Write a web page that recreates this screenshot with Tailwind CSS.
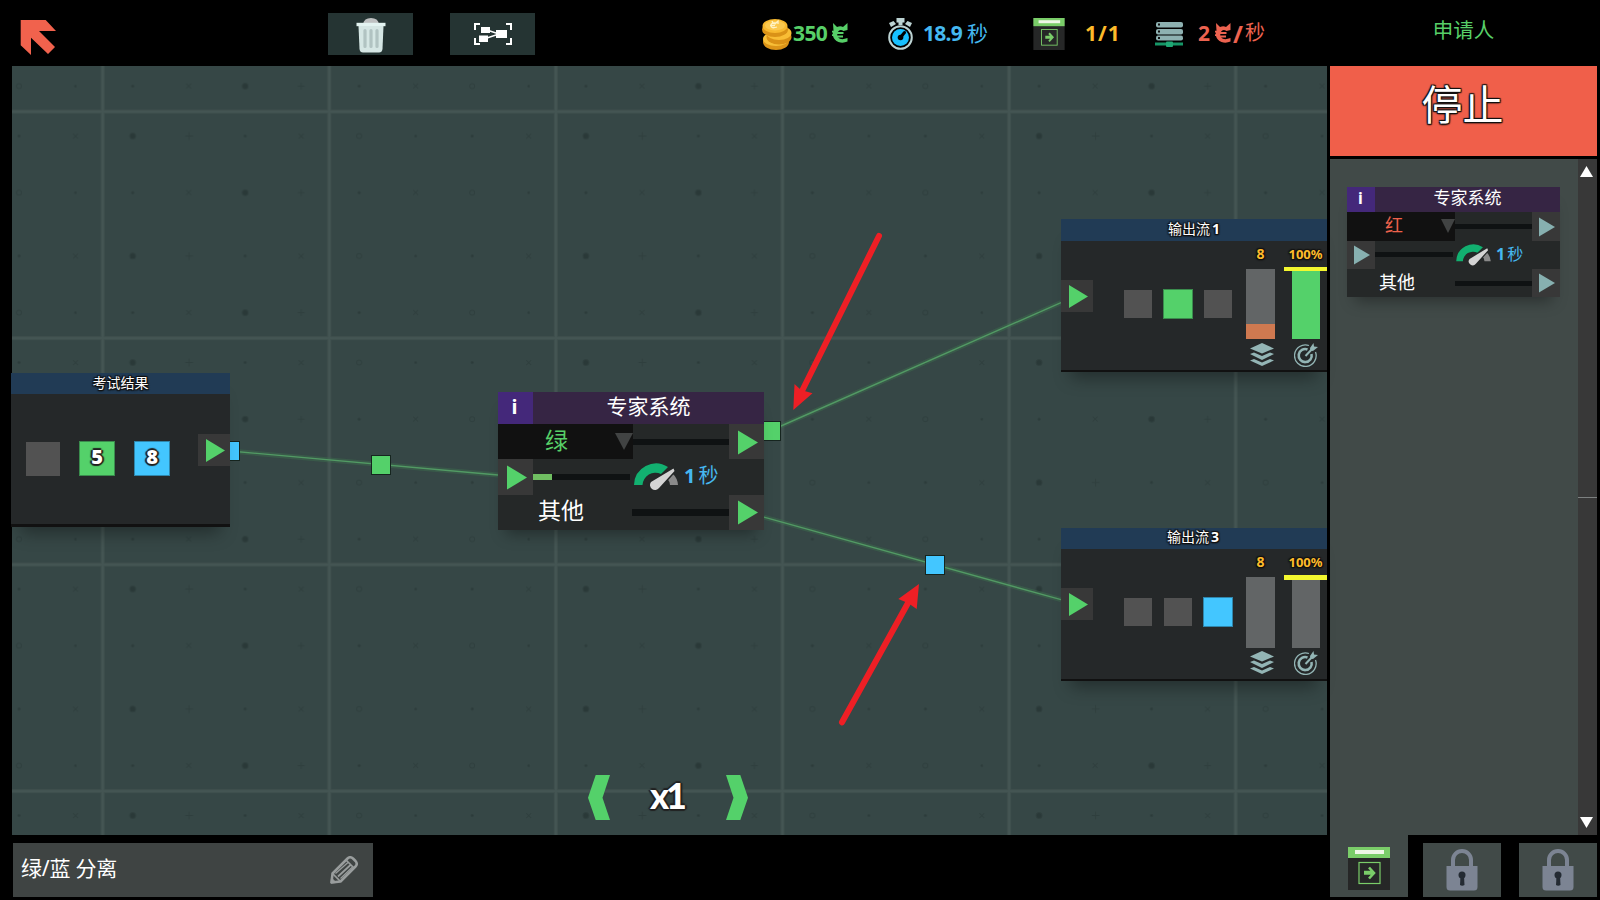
<!DOCTYPE html>
<html lang="zh-CN">
<head>
    <meta charset="UTF-8">
    <meta name="viewport" content="width=device-width, initial-scale=1.0">
    <title>绿/蓝 分离</title>
    <script src="https://cdn.jsdelivr.net/npm/@tailwindcss/browser@4"></script>
    <style>
        body { font-family: "Noto Sans", "Noto Sans CJK SC", sans-serif; }
        .outlined { text-shadow: -1px -1px 1px #111, 1px -1px 1px #111, -1px 1px 1px #111, 1px 1px 1px #111, 0 1px 2px #111; }
        .outlined-lg { text-shadow: -2px 0 1px #222, 2px 0 1px #222, 0 -2px 1px #222, 0 2px 1px #222, 1px 1px 1px #222, -1px 1px 1px #222; }
    </style>
</head>
<body class="bg-black w-[1600px] h-[900px] overflow-hidden text-white">
    <!-- shared icons -->
    <svg class="hidden">
        <symbol id="play" viewBox="0 0 20 24"><path d="M0 0L20 12L0 24z" fill="currentColor"/></symbol>
        <symbol id="gauge" viewBox="0 0 44 28">
            <path d="M0 22A22 22 0 0 1 34 4L27 11A13 13 0 0 0 8.500 22z" fill="#12b070"/>
            <path d="M38.500 10.500Q43.500 15 44 22H36Q35.500 18 33.500 16z" fill="#8a8a8a"/>
            <path d="M39.500 5.500L40.500 8L25 25A4.800 4.800 0 1 1 17 19z" fill="#d4d4d4" stroke="#252828" stroke-width="3" paint-order="stroke" stroke-linejoin="round"/>
        </symbol>
        <symbol id="coin" viewBox="0 0 16 20">
            <path d="M1 0L5 4Q8.500 2.500 11 4L15.500 0V7L11.500 8Q8 5.500 5.800 9H11.500V11H5.300V12.500H11V14.500H6Q9 17.500 15.500 15V18.500Q11 20.500 6.500 19Q2 17 1 13H0V11.200H.8V9.500H0V7.700H1.500z" fill="currentColor"/>
        </symbol>
        <symbol id="layers" viewBox="0 0 24 23">
            <g fill="#93b5b5"><path d="M12 0L24 5.500L12 10.500L0 5.500z"/><path d="M0 11L4 9.500L12 13L20 9.500L24 11L12 17z"/><path d="M0 17.500L4 16L12 19.500L20 16L24 17.500L12 23z"/></g>
        </symbol>
        <symbol id="target" viewBox="0 0 24 24">
            <g fill="none" stroke="#93b5b5"><path d="M15 2.500A10.800 10.800 0 1 0 21.500 9" stroke-width="1.300"/><path d="M13.500 6.500A6.500 6.500 0 1 0 17.500 11" stroke-width="2.600"/><path d="M11.500 13L19 5" stroke-width="2"/></g>
            <path d="M16 5L19.500 0L20 3.500L24 4L19 8L16.500 7.500z" fill="#93b5b5"/>
        </symbol>
        <symbol id="stream" viewBox="0 0 42 43">
            <rect width="42" height="43" fill="#262727"/><rect width="42" height="11" fill="#7acd69"/><rect x="7" y="3" width="29" height="4" fill="#eef7e6"/>
            <rect x="11" y="15.500" width="21" height="21" fill="none" stroke="#7acd69" stroke-width="1.200"/>
            <path d="M16 25H25M21 20.500L26 26L21 31.500M16 26.500H25" fill="none" stroke="#7acd69" stroke-width="2.600"/>
        </symbol>
        <symbol id="lock" viewBox="0 0 32 42">
            <path d="M7 19V11A9 9 0 0 1 25 11V19" fill="none" stroke="#7c8493" stroke-width="4"/>
            <path d="M.5 17H31.500V38Q31.500 41.500 28 41.500H4Q.5 41.500 .5 38z" fill="#7c8493"/>
            <circle cx="16" cy="26" r="3.500" fill="#242b33"/><path d="M14.500 27h3.500l.5 9q-2.500 1.500-4.500 0z" fill="#242b33"/>
        </symbol>
    </svg>

    <div class="flex w-[1600px] h-[900px]">
        <div class="w-[1330px] shrink-0 flex flex-col">
            <!-- Toolbar -->
            <header class="h-[66px] shrink-0 flex items-start">
                <svg class="w-9 h-9 ml-5 mt-5" viewBox="20 20 36 36"><path d="M20.700 20H45.700L56 31H39L55 47L48 54L31 37.700V55L20.700 45.300z" fill="#f1624d"/></svg>
                <button class="ml-[272px] mt-[13px] w-[85px] h-[42px] bg-[#253433] flex justify-center">
                    <svg class="w-[30px] h-[35px] mt-[5px]" viewBox="0 0 30 35">
                        <path d="M7 6Q8 0 15 0T23 6z" fill="#bfc1c2"/><rect x=".5" y="4.800" width="29" height="3.400" fill="#e3f3f1"/>
                        <path d="M2.500 8H27.500L26.500 31Q26 34.500 23 34.500H7Q4 34.500 3.500 31z" fill="#d5e6e4"/>
                        <path d="M9 12.500V28.500M15 12.500V28.500M21 12.500V28.500" stroke="#b1c3c2" stroke-width="3.200" stroke-linecap="round"/>
                    </svg>
                </button>
                <button class="ml-[37px] mt-[13px] w-[85px] h-[42px] bg-[#253433] flex justify-center">
                    <svg class="w-[38px] h-[22px] mt-[10px]" viewBox="0 0 38 22">
                        <path d="M6 1H1V7M32 1H37V7M6 21H1V15M32 21H37V15" fill="none" stroke="#fff" stroke-width="2"/>
                        <path d="M10 6L25 11L10 16" fill="none" stroke="#fff" stroke-width="1.500"/>
                        <path d="M7 4H16V10H7zM5 12.500H14V19H5zM22 7H33V15H22z" fill="#fff"/>
                    </svg>
                </button>

                <div class="ml-[227px] mt-[18px] h-8 flex items-center text-[20px] font-bold leading-8 text-[#57cf68]">
                    <svg class="w-[30px] h-8" viewBox="0 0 30 32">
                        <ellipse cx="14" cy="24" rx="13" ry="8" fill="#dc9418"/><ellipse cx="14" cy="21" rx="13" ry="7" fill="#f7bf38"/>
                        <ellipse cx="17" cy="19" rx="12.500" ry="7.500" fill="#da9116"/><ellipse cx="17" cy="15" rx="12.500" ry="7" fill="#f9bd35"/>
                        <ellipse cx="13" cy="11.500" rx="13" ry="7.500" fill="#da9217"/><ellipse cx="13" cy="8" rx="12.500" ry="7" fill="#f8b92f"/>
                        <ellipse cx="13" cy="7.500" rx="10" ry="5" fill="#fbc84d"/><path d="M10 3L11 5H14L16 3V6M15 9Q9 11 9 7.500T14 6M8 7.500H13" fill="none" stroke="#fff3c4" stroke-width="1.300"/>
                    </svg>
                    <span class="-mt-0.5 ml-px w-[39px] text-[21px] tracking-[-0.6px]">350</span>
                    <svg class="w-4 h-5 -mt-0.5"><use href="#coin"/></svg>
                </div>
                <div class="ml-[39px] mt-[18px] h-8 flex items-center text-[20px] font-bold leading-8 text-[#45b8f0]">
                    <svg class="w-[27px] h-8" viewBox="0 0 27 32">
                        <g fill="#bcd3d3"><path d="M9.500 0H17.500V4.500H15.500V7H11.500V4.500H9.500z"/><path d="M2 5L6.500 3L9 6L4 9zM25 5L20.500 3L18 6L23 9z"/></g>
                        <circle cx="13.500" cy="19.500" r="11.300" fill="#000" stroke="#bcd3d3" stroke-width="2"/><circle cx="13.500" cy="19.500" r="8.500" fill="#17c0ff"/>
                        <path d="M13.500 19.500L17.500 14.500" stroke="#000" stroke-width="3" stroke-linecap="round"/><circle cx="13.500" cy="19.500" r="2.800" fill="#000"/>
                    </svg>
                    <span class="-mt-0.5 ml-[9px] w-11 text-[21px] tracking-[-0.7px]">18.9</span><span class="-mt-0.5 font-normal text-[21px]">秒</span>
                </div>
                <div class="ml-[45px] mt-[18px] h-8 flex items-center text-[20px] font-bold leading-8 text-[#fdbb2a]">
                    <svg class="w-8 h-8" preserveAspectRatio="none"><use href="#stream"/></svg>
                    <span class="-mt-0.5 ml-[20px] w-[33px] text-[21px] tracking-[1px]">1/1</span>
                </div>
                <div class="ml-[37px] mt-[18px] h-8 flex items-center text-[20px] font-bold leading-8 text-[#ed6350]">
                    <svg class="w-[30px] h-8" viewBox="0 0 30 32">
                        <g fill="#8eb1b1"><rect x="1" y="4" width="27" height="5.500" rx="2"/><rect x="1" y="11" width="27" height="5.500" rx="2"/><rect x="1" y="17.500" width="27" height="5" rx="2"/></g>
                        <g fill="#111"><rect x="3" y="5.500" width="2" height="2"/><rect x="3" y="12.500" width="2" height="2"/><rect x="3" y="19" width="2" height="2"/></g>
                        <path d="M0 26H28" stroke="#169667" stroke-width="3"/><rect x="11" y="23.500" width="7" height="5.500" rx="1" fill="#1fa875"/>
                    </svg>
                    <span class="-mt-0.5 ml-[13px] w-[17px] text-[21px]">2</span>
                    <svg class="w-4 h-5 -mt-0.5"><use href="#coin"/></svg>
                    <span class="ml-0.5 w-3 text-[24px]">/</span><span class="-mt-0.5 font-normal">秒</span>
                </div>
            </header>

            <!-- Board -->
            <main class="relative ml-3 w-[1315px] h-[769px] shrink-0 bg-[#364746]">
                <svg class="absolute inset-0 w-[1315px] h-[769px]" viewBox="12 66 1315 769">
                    <defs>
                        <pattern id="board" x="102.700" y="111.600" width="453.200" height="226.500" patternUnits="userSpaceOnUse">
                            <path d="M0 0V226.500M226.600 0V226.500M453.200 0V226.500M0 0H453.200M0 226.500H453.200" stroke="#3f4f4d" stroke-width="4"/>
                            <path d="M0 0V226.500M226.600 0V226.500M453.200 0V226.500M0 0H453.200M0 226.500H453.200" stroke="#445553" stroke-width="2"/>
                            <g id="rowA" fill="#2a3938" stroke="#2f3f3e" stroke-width="1">
                                <circle cx="30" cy="24.500" r="3"/><path d="M82.500 24.500h8M86.500 20.500v8"/><circle cx="142.500" cy="24.500" r="1.200"/><path d="M196 22l5 5M201 22l-5 5"/>
                                <circle cx="256.500" cy="24.500" r="2.500" fill="none"/><circle cx="313" cy="24.500" r="1"/><circle cx="369.500" cy="24.500" r="1.200"/><path d="M423.500 22l5 5M428.500 22l-5 5"/>
                            </g>
                            <g id="rowB" fill="#2a3938" stroke="#2f3f3e" stroke-width="1">
                                <circle cx="30" cy="81" r="1.200"/><path d="M83.500 78.500l5 5M88.500 78.500l-5 5"/><circle cx="142.500" cy="81" r="3"/><path d="M195 81h7M198.500 77.500v7"/>
                                <circle cx="256.500" cy="81" r="1.200"/><path d="M310.500 78.500l5 5M315.500 78.500l-5 5"/><circle cx="369.500" cy="81" r="2.500" fill="none"/><circle cx="426" cy="81" r="1"/>
                            </g>
                            <use href="#rowA" y="120"/><use href="#rowB" y="120"/>
                        </pattern>
                    </defs>
                    <rect x="12" y="66" width="1315" height="769" fill="url(#board)"/>
                    <g stroke="#3f7a50" stroke-opacity=".35" stroke-width="5"><path d="M230 451L498 475M764 433.500L1061 302.600M764 517.200L1061 599.700"/></g>
                    <g stroke="#529a64" stroke-width="1.400"><path d="M230 451L498 475M764 433.500L1061 302.600M764 517.200L1061 599.700"/></g>
                    <g stroke="#16251f" stroke-width="1">
                        <rect x="371.500" y="455.500" width="19" height="19" fill="#54d16a"/>
                        <rect x="220.500" y="441.500" width="19" height="19" fill="#43c6ff"/>
                        <rect x="761.500" y="421.500" width="19" height="19" fill="#54d16a"/>
                        <rect x="925.500" y="555.500" width="19" height="19" fill="#43c6ff"/>
                    </g>
                </svg>

                <!-- Input stream -->
                <section class="absolute -left-px top-[307px] w-[219px] h-[154px] bg-[#252829] border-b-[3px] border-[#111] shadow-[0_16px_16px_-10px_rgba(0,0,0,0.35)]">
                    <h2 class="h-[21px] bg-[#213b55] text-center text-[14px] leading-[20px] outlined">考试结果</h2>
                    <div class="flex">
                        <div class="flex items-center gap-[19px] mt-[47px] ml-[15px] h-[35px] text-[20px] font-black leading-none">
                            <span class="w-[34px] h-[34px] bg-[#525252]"></span>
                            <span class="w-9 h-[35px] pb-1 bg-[#54d16a] border border-[#3a8c4d] grid place-items-center outlined-lg">5</span>
                            <span class="w-9 h-[35px] pb-1 bg-[#43c6ff] border border-[#2f86ac] grid place-items-center outlined-lg">8</span>
                        </div>
                        <span class="ml-auto mt-10 w-8 h-8 bg-[#383838] flex items-center pl-2 text-[#54d16a]"><svg class="w-[19px] h-[23px]"><use href="#play"/></svg></span>
                    </div>
                </section>

                <!-- Expert system -->
                <section class="absolute left-[486px] top-[326px] w-[266px] h-[138px] bg-[#252828] shadow-[0_12px_14px_-8px_rgba(0,0,0,0.35)]">
                    <div class="flex h-8 bg-[#362544]">
                        <span class="w-[35px] pr-0.5 bg-[#44287a] text-center text-[20px] font-bold leading-[29px]">i</span>
                        <h2 class="flex-1 text-center text-[21px] leading-[29px]">专家系统</h2>
                    </div>
                    <div class="flex items-center h-[35px]">
                        <div class="w-[135px] h-full bg-[#111] flex items-center text-[#57cf68]">
                            <span class="ml-[47px] -mt-[4px] text-[23px] leading-8">绿</span>
                            <svg class="w-[18px] h-[17px] ml-auto" viewBox="0 0 18 17"><path d="M0 0H18L9 17z" fill="#414343"/></svg>
                        </div>
                        <span class="w-24 h-1.5 mt-px bg-[#0f1213]"></span>
                        <span class="w-[35px] h-full bg-[#383838] flex items-center pl-[9px] pt-px text-[#54d16a]"><svg class="w-5 h-[25px]"><use href="#play"/></svg></span>
                    </div>
                    <div class="flex items-center h-9">
                        <span class="w-[35px] h-full bg-[#383838] flex items-center pl-[9px] text-[#54d16a]"><svg class="w-5 h-[25px]"><use href="#play"/></svg></span>
                        <span class="w-[97px] h-1.5 bg-[#0f1213]"><span class="block h-full w-[19px] bg-[#70bf62]"></span></span>
                        <svg class="w-11 h-7 ml-1"><use href="#gauge"/></svg>
                        <span class="ml-[6px] -mt-0.5 text-[20px] leading-8 text-[#45b8f0]"><b class="mr-[3px]">1</b>秒</span>
                    </div>
                    <div class="flex items-center h-[35px]">
                        <span class="w-[134px] pl-[40px] -mt-[5px] text-[23px] leading-8">其他</span>
                        <span class="w-[97px] h-[7px] bg-[#0f1213]"></span>
                        <span class="w-[35px] h-full bg-[#383838] flex items-center pl-[9px] text-[#54d16a]"><svg class="w-5 h-[25px]"><use href="#play"/></svg></span>
                    </div>
                </section>

                <!-- Output stream 1 -->
                <section class="absolute left-[1049px] top-[153px] w-[266px] h-[153px] bg-[#252829] border-b-2 border-[#111] shadow-[0_16px_16px_-10px_rgba(0,0,0,0.35)]">
                    <h2 class="h-[22px] bg-[#213b55] text-center text-[14px] leading-[19px] outlined">输出流<b class="ml-[2px]">1</b></h2>
                    <div class="flex h-[128px]">
                        <span class="mt-[39px] w-8 h-8 bg-[#383838] flex items-center pl-2 text-[#54d16a]"><svg class="w-[19px] h-[23px]"><use href="#play"/></svg></span>
                        <div class="flex items-center gap-[11px] mt-12 ml-[31px] h-[30px]">
                            <span class="w-7 h-[28px] bg-[#525252]"></span>
                            <span class="w-[30px] h-[30px] bg-[#54d16a] border border-[#3a8c4d]"></span>
                            <span class="w-7 h-[28px] bg-[#525252]"></span>
                        </div>
                        <div class="ml-[14px] w-[29px] flex flex-col items-center">
                            <b class="mt-[3px] h-[25px] text-[14px] leading-5 text-[#fdbb2a] outlined">8</b>
                            <span class="w-full h-[70px] bg-[#626566] flex items-end"><span class="w-full h-[15px] bg-[#cf7950]"></span></span>
                            <svg class="w-6 h-[23px] mt-1 ml-0.5"><use href="#layers"/></svg>
                        </div>
                        <div class="ml-[9px] w-[43px] flex flex-col">
                            <b class="mt-[3px] h-[23px] text-center text-[13px] leading-5 text-[#fdbb2a] outlined">100%</b>
                            <span class="h-1 bg-[#f3f72f]"></span>
                            <span class="ml-2 w-7 h-[68px] bg-[#54d16a]"></span>
                            <svg class="w-6 h-6 ml-[10px] mt-1"><use href="#target"/></svg>
                        </div>
                    </div>
                </section>

                <!-- Output stream 3 -->
                <section class="absolute left-[1049px] top-[462px] w-[266px] h-[153px] bg-[#252829] border-b-2 border-[#111] shadow-[0_16px_16px_-10px_rgba(0,0,0,0.35)]">
                    <h2 class="h-[21px] bg-[#213b55] pr-0.5 text-center text-[14px] leading-[18px] outlined">输出流<b class="ml-[2px]">3</b></h2>
                    <div class="flex h-[128px]">
                        <span class="mt-[39px] w-8 h-8 bg-[#383838] flex items-center pl-2 text-[#54d16a]"><svg class="w-[19px] h-[23px]"><use href="#play"/></svg></span>
                        <div class="flex items-center gap-[12px] mt-12 ml-[31px] h-[30px]">
                            <span class="w-7 h-[28px] bg-[#525252]"></span>
                            <span class="w-7 h-[28px] bg-[#525252]"></span>
                            <span class="-ml-px w-[30px] h-[30px] bg-[#43c6ff] border border-[#2f86ac]"></span>
                        </div>
                        <div class="ml-[13px] w-[29px] flex flex-col items-center">
                            <b class="mt-[3px] h-[25px] text-[14px] leading-5 text-[#fdbb2a] outlined">8</b>
                            <span class="w-full h-[71px] bg-[#626566]"></span>
                            <svg class="w-6 h-[23px] mt-[3px] ml-0.5"><use href="#layers"/></svg>
                        </div>
                        <div class="ml-[9px] w-[43px] flex flex-col">
                            <b class="mt-[3px] h-[23px] text-center text-[13px] leading-5 text-[#fdbb2a] outlined">100%</b>
                            <span class="h-[5px] bg-[#f3f72f]"></span>
                            <span class="ml-2 w-7 h-[68px] bg-[#626566]"></span>
                            <svg class="w-6 h-6 ml-[10px] mt-[3px]"><use href="#target"/></svg>
                        </div>
                    </div>
                </section>

                <!-- Arrows -->
                <svg class="absolute inset-0 w-[1315px] h-[769px]" viewBox="12 66 1315 769">
                    <path d="M879 236L802 391M842 722.300L908 603" stroke="#ee1f25" stroke-width="6" stroke-linecap="round"/>
                    <path d="M793.300 410L794.500 384L801 390L812.500 393.300zM919 584L898.300 599L908 603L916.700 609z" fill="#ee1f25"/>
                </svg>

                <!-- Speed -->
                <div class="absolute left-[576px] top-[709px] flex items-center w-[160px] h-[45px]">
                    <svg class="w-[22px] h-[45px]" viewBox="0 0 22 45"><path d="M7.700 0H22L14.500 22.700L22 45H7.700L0 22.700z" fill="#54d16a"/></svg>
                    <span class="flex-1 -mt-1 pr-0.5 text-center font-[Lato] font-black text-[36px] leading-[45px] tracking-[-3px] outlined-lg">x1</span>
                    <svg class="w-[22px] h-[45px]" viewBox="0 0 22 45"><path d="M0 0H14.300L22 22.700L14.300 45H0L7.500 22.700z" fill="#54d16a"/></svg>
                </div>
            </main>

            <footer class="pt-2 pl-[13px]">
                <div class="w-[360px] h-[54px] bg-[#3f4443] flex items-center justify-between pl-2 pr-[15px]">
                    <span class="-mt-1 text-[21px] leading-8 tracking-[-0.2px]">绿/蓝 分离</span>
                    <svg class="w-7 h-7" viewBox="0 0 28 28" fill="none" stroke="#999d9d">
                        <path d="M1.500 26.500L2.500 17.500L17.500 2.500Q20 0 23 2.500L25.500 5Q28 8 25.500 10.500L10.500 25.500z" stroke-width="2.500" stroke-linejoin="round"/>
                        <path d="M16 4L24 12M2.500 17.500L10.500 25.500M8 20.500L20.500 9" stroke-width="1.700"/><path d="M5.500 17.500L18 6.500M10.500 22.500L22.500 11" stroke-width="1.200"/><path d="M1 27L1.500 22L6 26.500z" fill="#999d9d"/>
                    </svg>
                </div>
            </footer>
        </div>

        <!-- Sidebar -->
        <aside class="w-[267px] flex flex-col">
            <div class="h-[66px] shrink-0 text-center text-[20.500px] leading-[60px] text-[#57cf68]">申请人</div>
            <button class="h-[90px] shrink-0 bg-[#f05f4a] text-[41px] leading-[74px] pb-[14px] pr-0.5 outlined">停止</button>
            <div class="mt-[3px] h-[676px] shrink-0 flex bg-[#414a48]">
                <div class="w-[248px] pt-7 pl-[17px]">
                    <section class="w-[213px] h-[110px] bg-[#252828] shadow-[0_12px_14px_-8px_rgba(0,0,0,0.35)]">
                        <div class="flex h-[25px] bg-[#362544]">
                            <span class="w-7 pr-px bg-[#44287a] text-center text-[16px] font-bold leading-[23px]">i</span>
                            <h2 class="flex-1 text-center text-[17px] leading-[22px]">专家系统</h2>
                        </div>
                        <div class="flex items-center h-[29px]">
                            <div class="w-[108px] h-full bg-[#111] flex text-[#ee624c]">
                                <span class="ml-[38px] text-[18px] leading-[26px]">红</span>
                                <svg class="w-[14px] h-[14px] ml-auto mt-[7px]" viewBox="0 0 18 17" preserveAspectRatio="none"><path d="M0 0H18L9 17z" fill="#414343"/></svg>
                            </div>
                            <span class="w-[77px] h-[5px] bg-[#0f1213]"></span>
                            <span class="w-7 h-full bg-[#383838] flex items-center pl-[7px] text-[#87b0b0]"><svg class="w-4 h-5"><use href="#play"/></svg></span>
                        </div>
                        <div class="flex items-center h-7">
                            <span class="w-7 h-full bg-[#383838] flex items-center pl-[7px] text-[#87b0b0]"><svg class="w-4 h-5"><use href="#play"/></svg></span>
                            <span class="w-[78px] h-[5px] -mt-px bg-[#0f1213]"></span>
                            <svg class="w-[35px] h-[22px] ml-[3px]"><use href="#gauge"/></svg>
                            <span class="ml-[5px] -mt-[3px] text-[16px] leading-7 text-[#45b8f0]"><b class="mr-[2px]">1</b>秒</span>
                        </div>
                        <div class="flex items-center h-7">
                            <span class="w-[108px] pl-8 -mt-0.5 text-[18px] leading-6">其他</span>
                            <span class="w-[77px] h-[5px] bg-[#0f1213]"></span>
                            <span class="w-7 h-full bg-[#383838] flex items-center pl-[7px] text-[#87b0b0]"><svg class="w-4 h-5"><use href="#play"/></svg></span>
                        </div>
                    </section>
                </div>
                <div class="w-[19px] bg-[#383838] flex flex-col justify-between items-center py-[7px] pr-0.5">
                    <svg class="w-[13px] h-[11px]" viewBox="0 0 13 11"><path d="M0 11L6.500 0L13 11z" fill="#fff"/></svg>
                    <span class="w-[19px] h-px ml-0.5 bg-[#7c8080]"></span>
                    <svg class="w-[13px] h-[11px]" viewBox="0 0 13 11"><path d="M0 0L6.500 11L13 0z" fill="#fff"/></svg>
                </div>
            </div>
            <nav class="flex justify-between items-end h-[62px]">
                <span class="w-[78px] h-[62px] bg-[#414a48] pl-[18px] pt-3"><svg class="w-[42px] h-[43px]"><use href="#stream"/></svg></span>
                <span class="ml-[-3px] w-[78px] h-[54px] bg-[#414a48] flex justify-center pt-[6px]"><svg class="w-8 h-[42px]"><use href="#lock"/></svg></span>
                <span class="w-[78px] h-[54px] bg-[#414a48] flex justify-center pt-[6px]"><svg class="w-8 h-[42px]"><use href="#lock"/></svg></span>
            </nav>
        </aside>
    </div>
</body>
</html>
